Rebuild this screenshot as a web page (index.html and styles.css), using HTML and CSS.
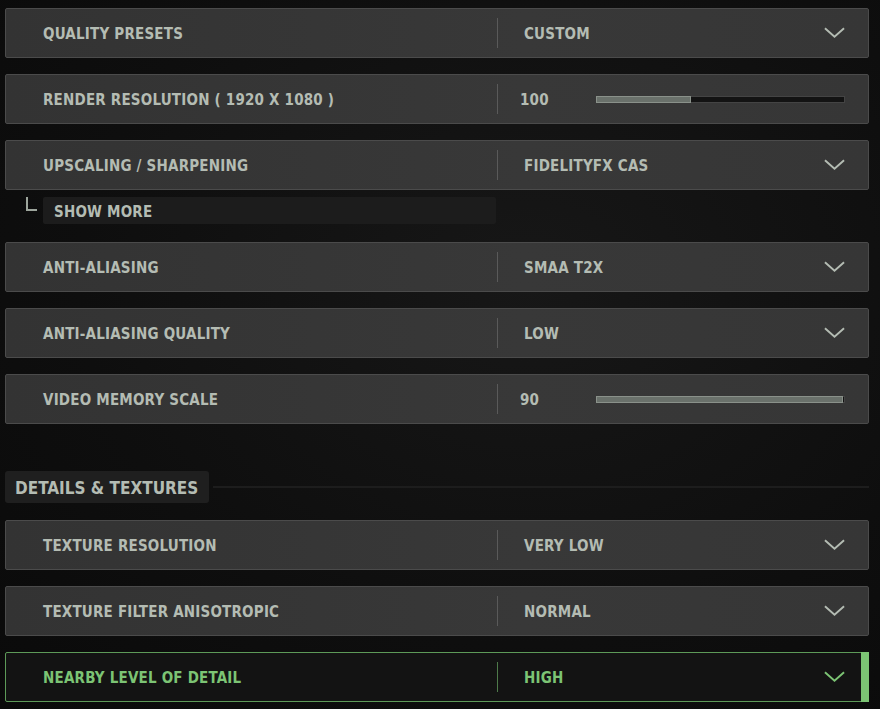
FILE: index.html
```html
<!DOCTYPE html>
<html>
<head>
<meta charset="utf-8">
<link rel="stylesheet" href="styles.css">
</head>
<body>
<div class="list">
  <div class="row">
    <div class="label">QUALITY PRESETS</div>
    <div class="sep"></div>
    <div class="value">CUSTOM</div>
    <svg class="chev" viewBox="0 0 22 12"><path d="M1 1 L11 10 L21 1" /></svg>
  </div>
  <div class="row">
    <div class="label">RENDER RESOLUTION ( 1920 X 1080 )</div>
    <div class="sep"></div>
    <div class="num">100</div>
    <div class="track"><div class="fill" style="width:38.5%"></div></div>
  </div>
  <div class="row">
    <div class="label">UPSCALING / SHARPENING</div>
    <div class="sep"></div>
    <div class="value">FIDELITYFX CAS</div>
    <svg class="chev" viewBox="0 0 22 12"><path d="M1 1 L11 10 L21 1" /></svg>
  </div>
  <div class="more">
    <div class="bracket"></div>
    <div class="more-box">SHOW MORE</div>
  </div>
  <div class="row">
    <div class="label">ANTI-ALIASING</div>
    <div class="sep"></div>
    <div class="value">SMAA T2X</div>
    <svg class="chev" viewBox="0 0 22 12"><path d="M1 1 L11 10 L21 1" /></svg>
  </div>
  <div class="row">
    <div class="label">ANTI-ALIASING QUALITY</div>
    <div class="sep"></div>
    <div class="value">LOW</div>
    <svg class="chev" viewBox="0 0 22 12"><path d="M1 1 L11 10 L21 1" /></svg>
  </div>
  <div class="row">
    <div class="label">VIDEO MEMORY SCALE</div>
    <div class="sep"></div>
    <div class="num">90</div>
    <div class="track"><div class="fill" style="width:100%"></div></div>
  </div>
  <div class="section">
    <div class="section-title">DETAILS &amp; TEXTURES</div>
    <div class="section-line"></div>
  </div>
  <div class="row">
    <div class="label">TEXTURE RESOLUTION</div>
    <div class="sep"></div>
    <div class="value">VERY LOW</div>
    <svg class="chev" viewBox="0 0 22 12"><path d="M1 1 L11 10 L21 1" /></svg>
  </div>
  <div class="row">
    <div class="label">TEXTURE FILTER ANISOTROPIC</div>
    <div class="sep"></div>
    <div class="value">NORMAL</div>
    <svg class="chev" viewBox="0 0 22 12"><path d="M1 1 L11 10 L21 1" /></svg>
  </div>
  <div class="row active">
    <div class="label">NEARBY LEVEL OF DETAIL</div>
    <div class="sep"></div>
    <div class="value">HIGH</div>
    <svg class="chev" viewBox="0 0 22 12"><path d="M1 1 L11 10 L21 1" /></svg>
    <div class="bar"></div>
  </div>
</div>
</body>
</html>
```
FILE: styles.css
```css
html, body {
  margin: 0;
  padding: 0;
}
body {
  width: 880px;
  height: 709px;
  overflow: hidden;
  background: radial-gradient(ellipse at 60% 40%, #171717 0%, #0e0e0e 60%, #0a0a0a 100%);
  font-family: "DejaVu Sans Condensed", "DejaVu Sans", sans-serif;
  font-weight: bold;
  color: #b4bcb3;
}
.list {
  display: flex;
  flex-direction: column;
  padding: 8px 11px 0 5px;
}
.row {
  position: relative;
  display: flex;
  align-items: center;
  height: 50px;
  box-sizing: border-box;
  border: 1px solid #4b4b4b;
  border-radius: 2px;
  background: linear-gradient(90deg, #333333 0%, #383838 60%, #363636 100%);
  margin-bottom: 16px;
  font-size: 15px;
  letter-spacing: 0.2px;
}
.label, .value, .num {
  padding-top: 2px;
}
.label {
  width: 491px;
  flex: none;
  padding-left: 37px;
  box-sizing: border-box;
  white-space: nowrap;
}
.sep {
  width: 1px;
  flex: none;
  height: 30px;
  background: #5a5a5a;
}
.value {
  flex: 1;
  padding-left: 26px;
}
.num {
  width: 98px;
  flex: none;
  padding-left: 22px;
  box-sizing: border-box;
}
.track {
  width: 249px;
  height: 7px;
  box-sizing: border-box;
  border: 1px solid #444;
  background: #131313;
  position: relative;
}
.fill {
  position: absolute;
  left: -1px;
  top: -1px;
  bottom: -1px;
  border: 1px solid #8a918a;
  background: #6a716b;
  box-sizing: border-box;
}
.chev {
  width: 21px;
  height: 12px;
  margin-right: 23px;
  fill: none;
  stroke: #b4bcb3;
  stroke-width: 2;
}
.more {
  display: flex;
  align-items: flex-start;
  height: 27px;
  margin-top: -9px;
  margin-bottom: 18px;
}
.bracket {
  width: 11px;
  height: 14px;
  margin-left: 21px;
  margin-right: 6px;
  border-left: 2px solid #9da59c;
  border-bottom: 2px solid #9da59c;
  box-sizing: border-box;
  margin-top: 0;
}
.more-box {
  width: 453px;
  height: 27px;
  background: #1c1c1c;
  border-radius: 2px;
  padding: 2px 0 0 11px;
  box-sizing: border-box;
  line-height: 27px;
  font-size: 15px;
  letter-spacing: 0.2px;
}
.section {
  display: flex;
  align-items: center;
  margin-top: 31px;
  margin-bottom: 17px;
}
.section-title {
  height: 32px;
  line-height: 34px;
  background: #1f1f1f;
  border-radius: 3px;
  padding: 0 0 0 10px;
  font-size: 17px;
  letter-spacing: 0;
  width: 204px;
  box-sizing: border-box;
  white-space: nowrap;
}
.section-line {
  flex: 1;
  height: 2px;
  margin-left: 4px;
  background: #1d1d1d;
}
.row.active {
  background: #131313;
  border-color: #5d9a58;
  color: #7cc474;
}
.row.active .sep {
  background: #4e7a4a;
}
.row.active .chev {
  stroke: #7cc474;
}
.bar {
  position: absolute;
  right: -1px;
  top: -1px;
  bottom: -1px;
  width: 8px;
  background: #7cc474;
}
```
